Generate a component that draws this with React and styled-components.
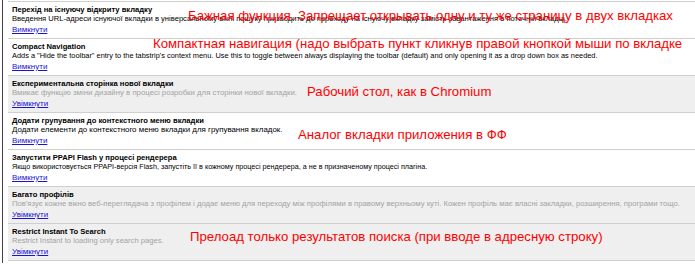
import React from "react";
import styled, { createGlobalStyle } from "styled-components";

const Global = createGlobalStyle`
  html, body {
    margin: 0;
    padding: 0;
    background: #fff;
  }
  body {
    font-family: "Liberation Sans", Arial, sans-serif;
    overflow: hidden;
  }
`;

const Frame = styled.div`
  display: flex;
  align-items: flex-start;
  width: 695px;
  height: 274px;
`;

const Edge = styled.div`
  width: 1px;
  height: 263px;
  margin-left: 2px;
  background: #463d4d;
  flex-shrink: 0;
`;

const List = styled.div`
  flex: 1;
  min-width: 0;
  margin-left: 5px;
  margin-top: 1px;
  border-top: 1px solid #cfcfcf;
`;

const Row = styled.div`
  position: relative;
  height: 37px;
  box-sizing: border-box;
  padding: 3px 0 0 4px;
  border-bottom: 1px solid #cfcfcf;
  background: ${p => (p.off ? "#efefef" : "#fff")};
`;

const Title = styled.div`
  font-size: 7.6px;
  line-height: 9px;
  font-weight: bold;
  color: #000;
  white-space: nowrap;
`;

const Desc = styled.div`
  font-size: ${p => p.size}px;
  line-height: 9px;
  color: ${p => (p.off ? "#a3a3a3" : "#000")};
  white-space: nowrap;
`;

const Toggle = styled.a`
  display: block;
  width: fit-content;
  margin-top: 2px;
  font-size: 8px;
  line-height: 9px;
  color: #1a12d6;
  text-decoration: underline;
  cursor: pointer;
`;

const Note = styled.span`
  position: absolute;
  left: ${p => p.x}px;
  top: ${p => p.y}px;
  font-size: 13.2px;
  line-height: 14px;
  color: #ff0000;
  white-space: nowrap;
  pointer-events: none;
`;

const flags = [
  {
    title: "Перехід на існуючу відкриту вкладку",
    desc: "Введення URL-адреси існуючої вкладки в універсальному вікні пошуку призводить до переходу на існуючу вкладку замість завантаження в поточній вкладці.",
    ds: 7.6,
    note: "Бажная функция. Запрещает открывать одну и ту же страницу в двух вкладках",
    nx: 188, ny: 7,
  },
  {
    title: "Compact Navigation",
    desc: "Adds a \"Hide the toolbar\" entry to the tabstrip's context menu. Use this to toggle between always displaying the toolbar (default) and only opening it as a drop down box as needed.",
    ds: 7.4,
    note: "Компактная навигация (надо выбрать пункт кликнув правой кнопкой мыши по вкладке",
    nx: 153, ny: -2,
  },
  {
    title: "Експериментальна сторінка нової вкладки",
    desc: "Вмикає функцію зміни дизайну в процесі розробки для сторінки нової вкладки.",
    ds: 7.8,
    note: "Рабочий стол, как в Chromium",
    nx: 307, ny: 9,
    off: true,
  },
  {
    title: "Додати групування до контекстного меню вкладки",
    desc: "Додати елементи до контекстного меню вкладки для групування вкладок.",
    ds: 7.9,
    note: "Аналог вкладки приложения в ФФ",
    nx: 298, ny: 15,
  },
  {
    title: "Запустити PPAPI Flash у процесі рендерера",
    desc: "Якщо використовується PPAPI-версія Flash, запустіть її в кожному процесі рендерера, а не в призначеному процесі плагіна.",
    ds: 7.2,
  },
  {
    title: "Багато профілів",
    desc: "Пов'язує кожне вікно веб-переглядача з профілем і додає меню для переходу між профілями в правому верхньому куті. Кожен профіль має власні закладки, розширення, програми тощо.",
    ds: 7.7,
    off: true,
  },
  {
    title: "Restrict Instant To Search",
    desc: "Restrict Instant to loading only search pages.",
    ds: 7.6,
    note: "Прелоад только результатов поиска (при вводе в адресную строку)",
    nx: 190, ny: 6,
    off: true,
  },
];

export default function App() {
  return (
    <>
      <Global />
      <Frame>
        <Edge />
        <List>
          {flags.map(f => (
            <Row key={f.title} off={f.off}>
              <Title>{f.title}</Title>
              <Desc off={f.off} size={f.ds}>{f.desc}</Desc>
              <Toggle>{f.off ? "Увімкнути" : "Вимкнути"}</Toggle>
              {f.note && (
                <Note x={f.nx - 8} y={f.ny}>
                  {f.note}
                </Note>
              )}
            </Row>
          ))}
        </List>
      </Frame>
    </>
  );
}
